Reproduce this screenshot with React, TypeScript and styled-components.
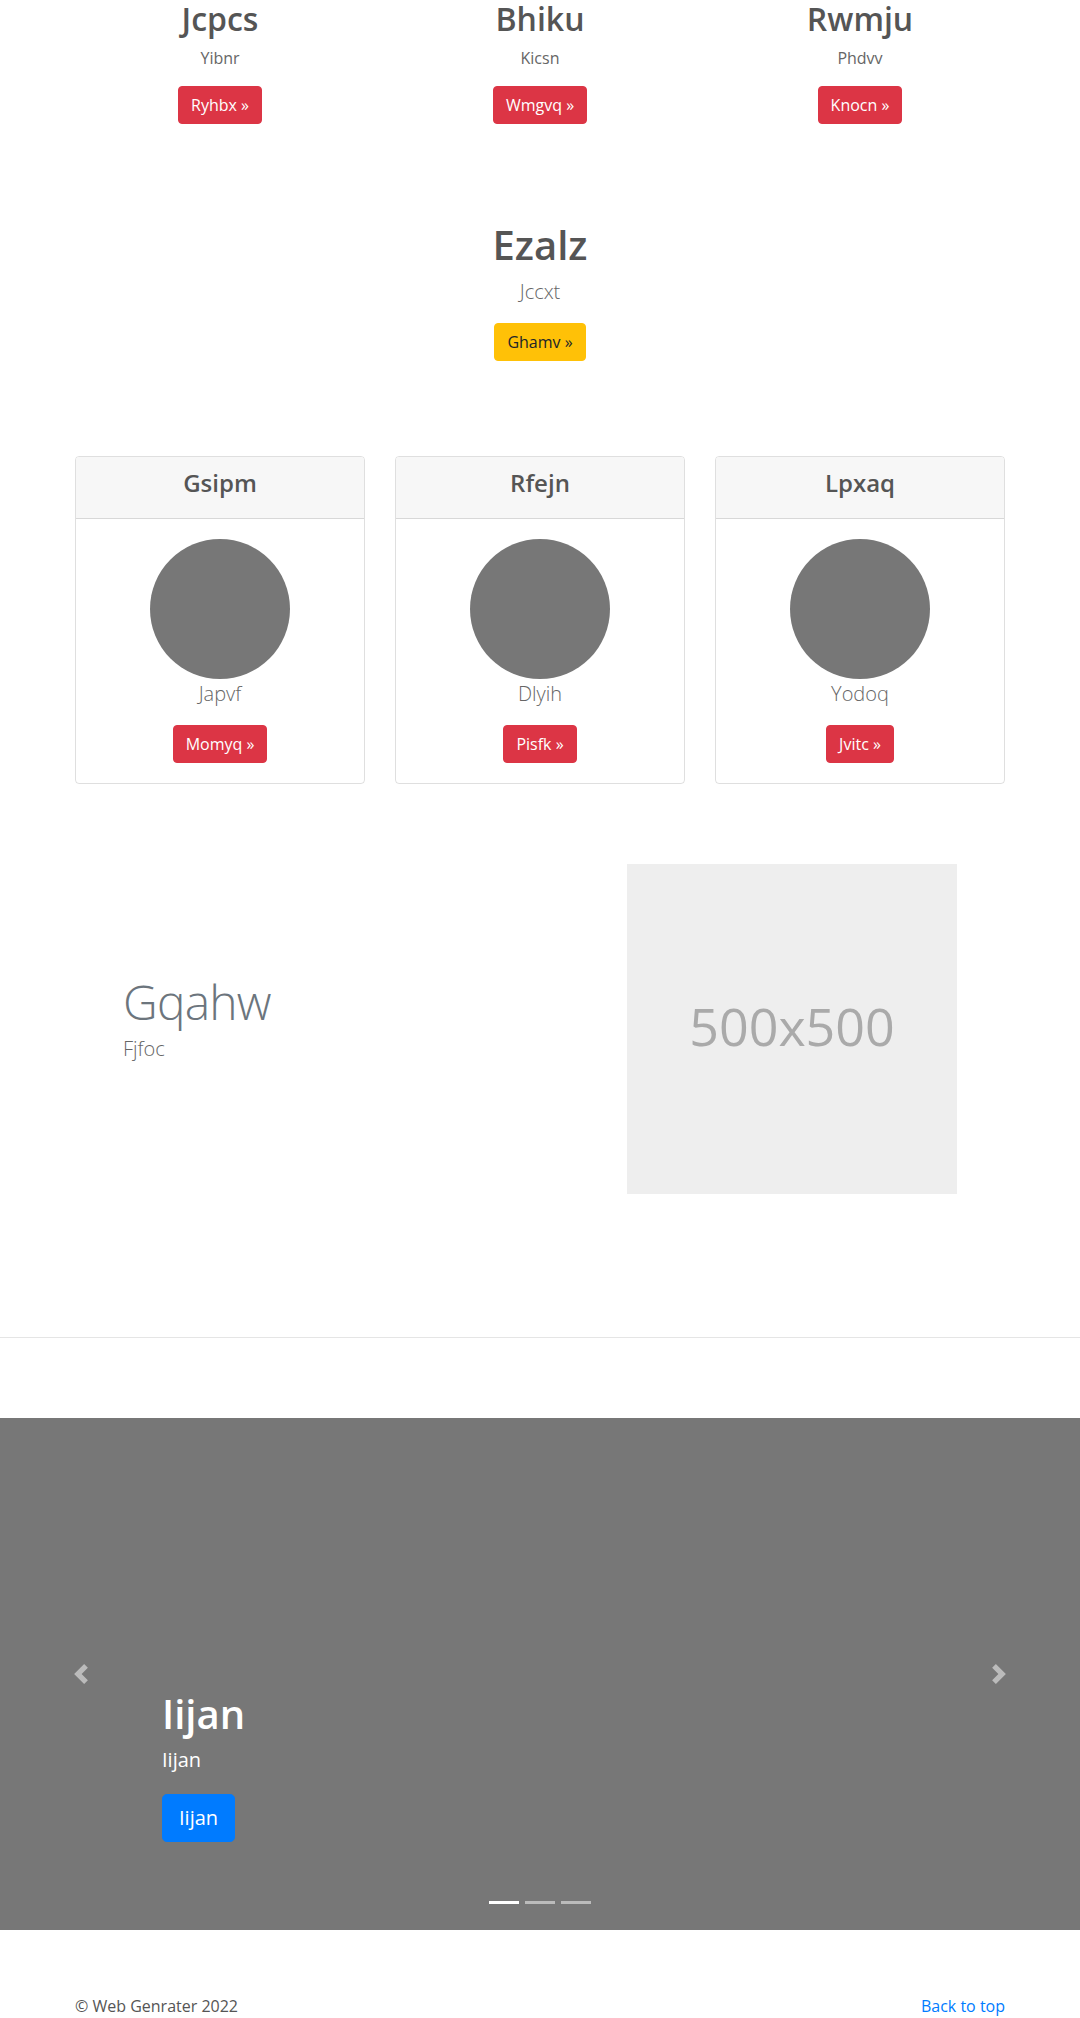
import React from "react";
import styled, { createGlobalStyle, css } from "styled-components";

const GlobalStyle = createGlobalStyle`
  *, *::before, *::after { box-sizing: border-box; }
  body {
    margin: 0;
    font-family: "Open Sans", "Noto Sans", sans-serif;
    font-size: 16px;
    line-height: 1.5;
    color: #555;
    background: #fff;
  }
`;

const Container = styled.div`
  width: 960px;
  margin: 0 auto;
  padding: 0 15px;
`;

const ThreeCol = styled.div<{ $mt?: number }>`
  display: grid;
  grid-template-columns: repeat(3, 1fr);
  column-gap: 30px;
  margin-top: ${(p) => p.$mt ?? 0}px;
`;

const Feature = styled.div`
  text-align: center;
`;

const Title = styled.h2<{ $size: number }>`
  margin: 0 0 8px;
  font-size: ${(p) => p.$size}px;
  line-height: 1.2;
  font-weight: 600;
  color: #555;
`;

const Sub = styled.p`
  margin: 0 0 16px;
  color: #666;
`;

const Lead = styled.p`
  margin: 0 0 16px;
  font-size: 20px;
  line-height: 1.5;
  font-weight: 300;
  color: #666;
`;

const variants = {
  danger: css`background: #dc3545; border-color: #dc3545; color: #fff;`,
  warning: css`background: #ffc107; border-color: #ffc107; color: #212529;`,
  primary: css`background: #007bff; border-color: #007bff; color: #fff;`,
};

const Btn = styled.a<{ $variant: keyof typeof variants; $lg?: boolean }>`
  display: inline-block;
  border: 1px solid transparent;
  text-decoration: none;
  font-weight: 400;
  font-size: ${(p) => (p.$lg ? 20 : 16)}px;
  line-height: 1.5;
  padding: ${(p) => (p.$lg ? "8px 16px" : "6px 12px")};
  border-radius: ${(p) => (p.$lg ? 4.8 : 4)}px;
  ${(p) => variants[p.$variant]}
`;

const Spotlight = styled.section`
  margin-top: 97px;
  text-align: center;
`;

const Card = styled.div`
  border: 1px solid rgba(0, 0, 0, 0.125);
  border-radius: 4px;
  overflow: hidden;
  text-align: center;
`;

const CardHeader = styled.div`
  background: #f7f7f7;
  border-bottom: 1px solid rgba(0, 0, 0, 0.125);
  padding: 12px 20px;
`;

const CardTitle = styled.h4`
  margin: 0 0 8px;
  font-size: 24px;
  line-height: 1.2;
  font-weight: 600;
  color: #555;
`;

const CardBody = styled.div`
  padding: 20px;
  display: flex;
  flex-direction: column;
  align-items: center;
`;

const Avatar = styled.div`
  width: 140px;
  height: 140px;
  border-radius: 50%;
  background: #777;
`;

const Featurette = styled.div`
  display: grid;
  grid-template-columns: 1fr 1fr;
  column-gap: 30px;
  align-items: center;
  margin-top: 80px;
`;

const FeaturetteText = styled.div`
  padding-left: 48px;
`;

const FeaturetteHeading = styled.h2`
  margin: 0 0 8px;
  font-size: 48px;
  line-height: 1;
  font-weight: 300;
  letter-spacing: -0.8px;
  color: #6c757d;
`;

const Placeholder = styled.div`
  width: 330px;
  height: 330px;
  margin-left: 72px;
  padding-bottom: 6px;
  background: #eee;
  color: #aaa;
  font-size: 52px;
  display: flex;
  align-items: center;
  justify-content: center;
`;

const Divider = styled.hr`
  margin: 143px 0 80px;
  border: 0;
  border-top: 1px solid rgba(0, 0, 0, 0.1);
  height: 0;
`;

const Carousel = styled.div`
  position: relative;
  height: 512px;
  background: #777;
  margin-bottom: 64px;
`;

const Caption = styled.div`
  position: absolute;
  left: 15%;
  right: 15%;
  bottom: 48px;
  padding: 20px 0;
  color: #fff;
  display: flex;
  flex-direction: column;
  align-items: flex-start;
  z-index: 10;
`;

const CaptionTitle = styled.h1`
  margin: 0 0 8px;
  font-size: 40px;
  line-height: 1.2;
  font-weight: 600;
`;

const CaptionText = styled.p`
  margin: 0 0 20px;
  font-size: 20px;
  line-height: 1.4;
`;

const CaptionAction = styled.div`
  margin-bottom: 20px;
  display: flex;
`;

const Control = styled.a<{ $side: "left" | "right" }>`
  position: absolute;
  top: 0;
  bottom: 0;
  ${(p) => p.$side}: 0;
  width: 15%;
  display: flex;
  align-items: center;
  justify-content: center;
  opacity: 0.5;
`;

const Indicators = styled.ol`
  position: absolute;
  left: 15%;
  right: 15%;
  bottom: 0;
  margin: 0 0 16px;
  padding: 0;
  list-style: none;
  display: flex;
  justify-content: center;
  z-index: 15;
`;

const Indicator = styled.li<{ $active?: boolean }>`
  box-sizing: content-box;
  width: 30px;
  height: 3px;
  margin: 0 3px;
  background: #fff;
  background-clip: padding-box;
  border-top: 10px solid transparent;
  border-bottom: 10px solid transparent;
  opacity: ${(p) => (p.$active ? 1 : 0.5)};
`;

const Footer = styled.footer`
  display: flex;
  justify-content: space-between;
`;

const FooterText = styled.p`
  margin: 0 0 16px;
`;

const FooterLink = styled.a`
  color: #007bff;
  text-decoration: none;
`;

const Chevron = ({ dir }: { dir: "prev" | "next" }) => (
  <svg width="20" height="20" viewBox="0 0 8 8" fill="#fff">
    <path
      d={
        dir === "prev"
          ? "M5.25 0l-4 4 4 4 1.5-1.5L4.25 4l2.5-2.5L5.25 0z"
          : "M2.75 0l-1.5 1.5L3.75 4l-2.5 2.5L2.75 8l4-4-4-4z"
      }
    />
  </svg>
);

const top = [
  { t: "Jcpcs", s: "Yibnr", b: "Ryhbx" },
  { t: "Bhiku", s: "Kicsn", b: "Wmgvq" },
  { t: "Rwmju", s: "Phdvv", b: "Knocn" },
];

const cards = [
  { t: "Gsipm", s: "Japvf", b: "Momyq" },
  { t: "Rfejn", s: "Dlyih", b: "Pisfk" },
  { t: "Lpxaq", s: "Yodoq", b: "Jvitc" },
];

export default function App() {
  return (
    <>
      <GlobalStyle />
      <Container>
        <ThreeCol>
          {top.map((f) => (
            <Feature key={f.t}>
              <Title $size={32}>{f.t}</Title>
              <Sub>{f.s}</Sub>
              <Btn href="#" $variant="danger">{f.b} »</Btn>
            </Feature>
          ))}
        </ThreeCol>

        <Spotlight>
          <Title as="h1" $size={40}>Ezalz</Title>
          <Lead>Jccxt</Lead>
          <Btn href="#" $variant="warning">Ghamv »</Btn>
        </Spotlight>

        <ThreeCol $mt={95}>
          {cards.map((c) => (
            <Card key={c.t}>
              <CardHeader>
                <CardTitle>{c.t}</CardTitle>
              </CardHeader>
              <CardBody>
                <Avatar />
                <Lead>{c.s}</Lead>
                <Btn href="#" $variant="danger">{c.b} »</Btn>
              </CardBody>
            </Card>
          ))}
        </ThreeCol>

        <Featurette>
          <FeaturetteText>
            <FeaturetteHeading>Gqahw</FeaturetteHeading>
            <Lead>Fjfoc</Lead>
          </FeaturetteText>
          <Placeholder>500x500</Placeholder>
        </Featurette>
      </Container>

      <Divider />

      <Carousel>
        <Caption>
          <CaptionTitle>Iijan</CaptionTitle>
          <CaptionText>Iijan</CaptionText>
          <CaptionAction>
            <Btn href="#" $variant="primary" $lg>Iijan</Btn>
          </CaptionAction>
        </Caption>
        <Control href="#" $side="left"><Chevron dir="prev" /></Control>
        <Control href="#" $side="right"><Chevron dir="next" /></Control>
        <Indicators>
          <Indicator $active />
          <Indicator />
          <Indicator />
        </Indicators>
      </Carousel>

      <Container>
        <Footer>
          <FooterText>© Web Genrater 2022</FooterText>
          <FooterText><FooterLink href="#">Back to top</FooterLink></FooterText>
        </Footer>
      </Container>
    </>
  );
}
